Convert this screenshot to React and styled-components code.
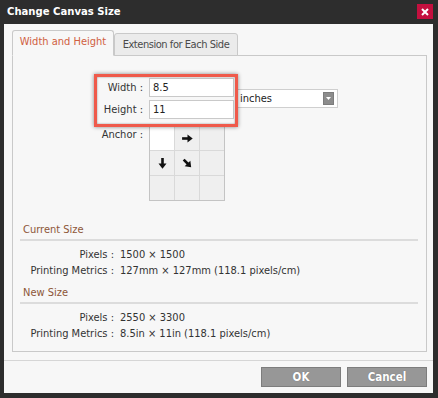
import React from "react";
import styled, { createGlobalStyle } from "styled-components";

const Global = createGlobalStyle`
  html, body { margin: 0; padding: 0; background: #2d2d2d; }
  body { font-family: "DejaVu Sans Condensed", "DejaVu Sans", sans-serif; font-size: 11px; color: #333; }
`;

const Window = styled.div`
  position: relative;
  width: 438px;
  height: 398px;
  box-sizing: border-box;
  background: #2d2d2d;
  padding: 0 5px 5px 4px;
  display: flex;
  flex-direction: column;
`;

const TitleBar = styled.div`
  height: 24px;
  display: flex;
  align-items: flex-start;
  justify-content: space-between;
`;

const Title = styled.div`
  margin: 5px 0 0 3px;
  color: #fff;
  font-weight: bold;
  font-size: 11.2px;
  line-height: 14px;
`;

const Close = styled.div`
  margin-top: 4px;
  width: 16px;
  height: 15px;
  background: #c4103f;
  display: flex;
  align-items: center;
  justify-content: center;
`;

const Content = styled.div`
  flex: 1;
  background: #f7f7f7;
  display: flex;
  flex-direction: column;
  padding: 7px 6px 0 8px;
`;

const Tabs = styled.div`
  display: flex;
  align-items: flex-end;
  height: 25px;
  margin-bottom: -1px;
  position: relative;
  z-index: 1;
`;

const Tab = styled.div`
  box-sizing: border-box;
  width: ${p => (p.$active ? 102 : 124)}px;
  height: ${p => (p.$active ? 26 : 23)}px;
  border: 1px solid #c9c9c9;
  border-bottom: ${p => (p.$active ? "1px solid #f7f7f7" : "1px solid #c9c9c9")};
  border-radius: 3px 3px 0 0;
  background: ${p => (p.$active ? "#f7f7f7" : "#ebebeb")};
  color: ${p => (p.$active ? "#d0603f" : "#4a4a4a")};
  letter-spacing: ${p => (p.$active ? 0 : -0.45)}px;
  font-size: 11px;
  white-space: nowrap;
  display: flex;
  align-items: center;
  justify-content: center;
  padding-bottom: ${p => (p.$active ? 3 : 0)}px;
`;

const Panel = styled.div`
  box-sizing: border-box;
  height: 297px;
  border: 1px solid #c9c9c9;
  padding: 0 8px 0 7px;
`;

const Form = styled.div`
  display: grid;
  grid-template-columns: 61px 85px 104px;
  column-gap: 0;
  row-gap: 3px;
  margin: 22px 0 0 68px;
  align-items: center;
`;

const Label = styled.div`
  text-align: right;
  padding-right: 6px;
  color: #333;
  align-self: ${p => p.$top ? "start" : "center"};
  margin-top: ${p => p.$top ? 6 : 0}px;
`;

const Input = styled.div`
  box-sizing: border-box;
  height: 19px;
  border: 1px solid #c9c9c9;
  background: #fff;
  padding-left: 3px;
  line-height: 17px;
  color: #222;
`;

const Select = styled.div`
  grid-column: 3;
  grid-row: 1 / span 2;
  align-self: center;
  margin-left: 2px;
  box-sizing: border-box;
  height: 19px;
  border: 1px solid #cfcfcf;
  background: #fff;
  display: flex;
  align-items: center;
  justify-content: space-between;
  padding: 0 3px 0 3px;
  color: #222;
`;

const SelectBtn = styled.div`
  width: 11px;
  height: 13px;
  background: #8c8c8c;
  border: 1px solid #7c7c7c;
  box-sizing: border-box;
  display: flex;
  align-items: center;
  justify-content: center;
`;

const AnchorGrid = styled.div`
  grid-column: 2 / span 2;
  margin-top: 3px;
  width: 76px;
  height: 76px;
  box-sizing: border-box;
  border: 1px solid #c4c4c4;
  background: #d9d9d9;
  display: grid;
  grid-template-columns: repeat(3, 24px);
  grid-template-rows: repeat(3, 24px);
  gap: 1px;
`;

const Cell = styled.div`
  background: ${p => (p.$sel ? "#ffffff" : "#efefef")};
  display: flex;
  align-items: center;
  justify-content: center;
`;

const Section = styled.div`
  margin-top: ${p => p.$first ? 22 : 8}px;
`;

const SectionHead = styled.div`
  color: #8d5637;
  padding-left: 3px;
  height: 14px;
  line-height: 14px;
  padding-bottom: 2px;
  border-bottom: 2px solid #dcdcdc;
`;

const Rows = styled.div`
  display: grid;
  grid-template-columns: 100px auto;
  row-gap: 2px;
  margin-top: 7px;
  line-height: 14px;
  white-space: nowrap;
`;

const Key = styled.div`
  text-align: right;
  color: #333;
  padding-right: 6px;
`;

const Val = styled.div`
  color: #333;
`;

const Footer = styled.div`
  margin-top: 8px;
  border-top: 1px solid #d6d6d6;
  display: flex;
  justify-content: flex-end;
  gap: 6px;
  padding: 6px 0 0 0;
  margin-right: -6px;
  padding-right: 6px;
  margin-left: -8px;
`;

const Button = styled.div`
  box-sizing: border-box;
  width: 80px;
  height: 20px;
  background: #979797;
  border: 1px solid #7d7d7d;
  color: #fff;
  font-weight: bold;
  font-size: 11.5px;
  display: flex;
  align-items: center;
  justify-content: center;
  text-shadow: 0 0 1px rgba(0,0,0,0.3);
`;

const Highlight = styled.div`
  position: absolute;
  left: 94px;
  top: 74px;
  width: 144px;
  height: 53px;
  box-sizing: border-box;
  border: 3px solid #ef5a4b;
  box-shadow: 0 0 4px rgba(0,0,0,0.45), inset 0 0 2px rgba(0,0,0,0.45);
  pointer-events: none;
`;

const Arrow = ({ dir }) => {
  const rot = dir === "right" ? 0 : dir === "down" ? 90 : 45;
  return (
    <svg width="13" height="13" viewBox="0 0 12 12" style={{ transform: `rotate(${rot}deg)` }}>
      <path d="M1 6 H7" stroke="#111" strokeWidth="2.4" />
      <path d="M6 2.3 L10.8 6 L6 9.7 Z" fill="#111" />
    </svg>
  );
};

export default function App() {
  return (
    <>
      <Global />
      <Window>
        <TitleBar>
          <Title>Change Canvas Size</Title>
          <Close>
            <svg width="8" height="8" viewBox="0 0 8 8">
              <path d="M1 1 L7 7 M7 1 L1 7" stroke="#fff" strokeWidth="2" />
            </svg>
          </Close>
        </TitleBar>
        <Content>
          <Tabs>
            <Tab $active>Width and Height</Tab>
            <Tab>Extension for Each Side</Tab>
          </Tabs>
          <Panel>
            <Form>
              <Label>Width :</Label>
              <Input>8.5</Input>
              <Select>
                <span>inches</span>
                <SelectBtn>
                  <svg width="5" height="3" viewBox="0 0 5 3">
                    <path d="M0 0 H5 L2.5 3 Z" fill="#fff" />
                  </svg>
                </SelectBtn>
              </Select>
              <Label>Height :</Label>
              <Input>11</Input>
              <Label $top>Anchor :</Label>
              <AnchorGrid>
                <Cell $sel />
                <Cell><Arrow dir="right" /></Cell>
                <Cell />
                <Cell><Arrow dir="down" /></Cell>
                <Cell><Arrow dir="diag" /></Cell>
                <Cell />
                <Cell />
                <Cell />
                <Cell />
              </AnchorGrid>
            </Form>
            <Section $first>
              <SectionHead>Current Size</SectionHead>
              <Rows>
                <Key>Pixels :</Key>
                <Val>1500 × 1500</Val>
                <Key>Printing Metrics :</Key>
                <Val>127mm × 127mm (118.1 pixels/cm)</Val>
              </Rows>
            </Section>
            <Section>
              <SectionHead>New Size</SectionHead>
              <Rows>
                <Key>Pixels :</Key>
                <Val>2550 × 3300</Val>
                <Key>Printing Metrics :</Key>
                <Val>8.5in × 11in (118.1 pixels/cm)</Val>
              </Rows>
            </Section>
          </Panel>
          <Footer>
            <Button>OK</Button>
            <Button>Cancel</Button>
          </Footer>
        </Content>
        <Highlight />
      </Window>
    </>
  );
}
